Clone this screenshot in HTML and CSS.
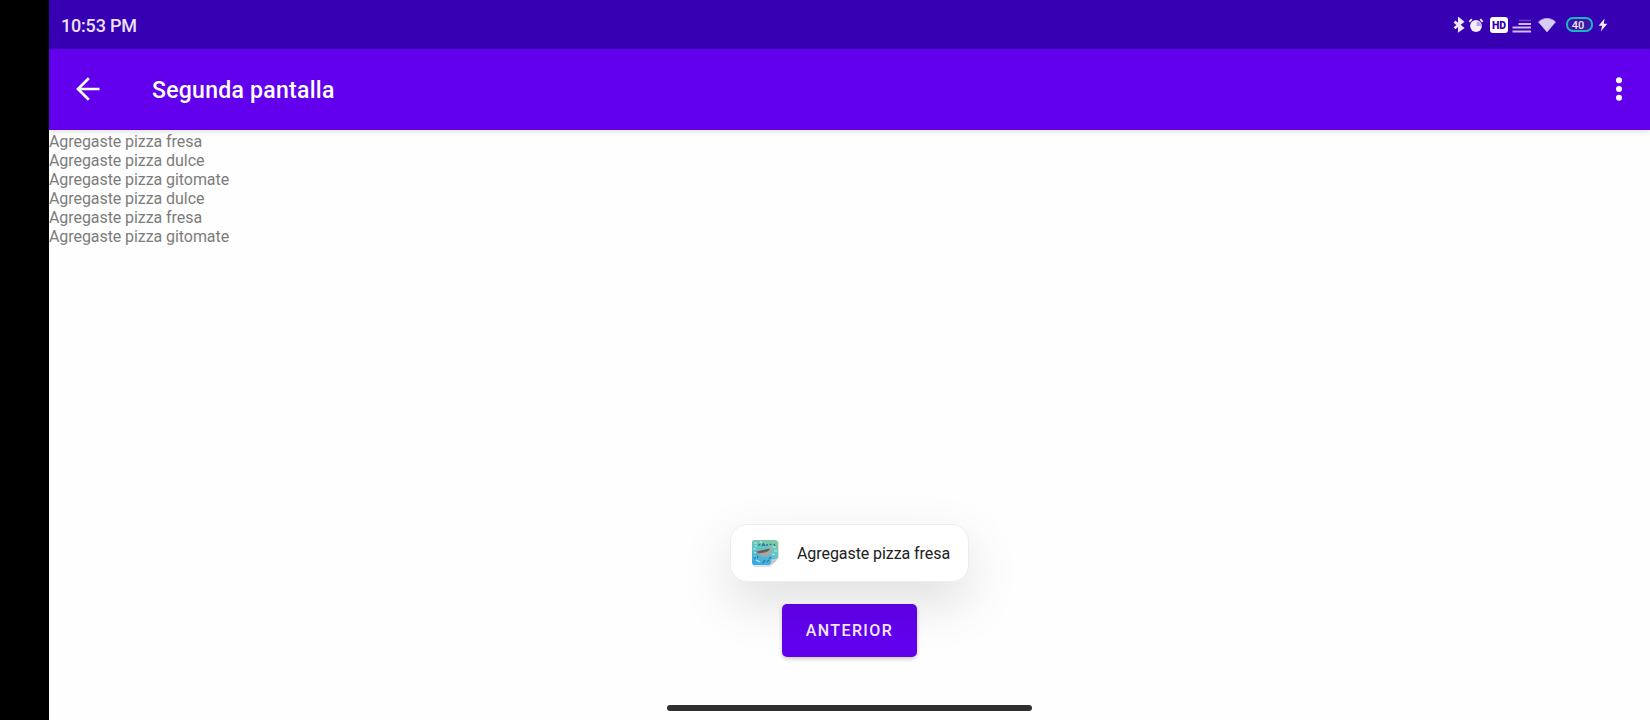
FILE: index.html
```html
<!DOCTYPE html>
<html lang="es">
<head>
<meta charset="utf-8">
<title>Segunda pantalla</title>
<link rel="stylesheet" href="styles.css">
</head>
<body>
<div class="screen">
  <header class="status">
    <span class="clock">10:53 PM</span>
    <div class="status-icons">
      <svg class="bt" width="12" height="16" viewBox="0 0 12 16"><path d="M1.500 4.600 9.400 11 6.300 13.200V2.300L9.400 4.800 1.500 11.200" fill="none" stroke="#efe8fa" stroke-width="2.700"/></svg>
      <svg class="alarm" width="16" height="16" viewBox="0 0 16 16"><circle cx="8" cy="9" r="5.900" fill="#f3edfc"/><path d="M8.600 4.600v4.400h4.600A4.500 4.500 0 0 0 8.600 4.600Z" fill="#b9a2e4"/><path d="M1.300 4.800 3.800 2.200M14.700 4.800 12.200 2.200" stroke="#efe8fa" stroke-width="1.900" fill="none"/></svg>
      <span class="hd">HD</span>
      <svg class="signal" width="20" height="16" viewBox="0 0 20 16"><path d="M7 3.500h12" stroke="#6a42c6" stroke-width="1.500"/><path d="M6.500 7h12.500M.5 10.500h18.500M.5 14.500h18.500" stroke="#cdbcef" stroke-width="1.900"/></svg>
      <svg class="wifi" width="18" height="16" viewBox="0 0 18 16"><path d="M.5 5C5 .2 13 .2 17.500 5L9 15Z" fill="#d9ccf3" stroke="#d9ccf3" stroke-width=".6" stroke-linejoin="round"/></svg>
      <span class="battery">40</span>
      <svg class="bolt" width="10" height="14" viewBox="0 0 10 14"><path d="M6.600.5.6 7.700H4.200L2.700 13.500 9.400 5.800H5.700Z" fill="#f3edfc"/></svg>
    </div>
  </header>
  <div class="toolbar">
    <svg class="back" width="24" height="26" viewBox="0 0 24 26"><path d="M23.500 12H2M12.800 1.200 2 12l10.800 10.800" fill="none" stroke="#fff" stroke-width="2.700"/></svg>
    <h1 class="title">Segunda pantalla</h1>
    <svg class="more" width="6" height="26" viewBox="0 0 6 26"><g fill="#fff"><circle cx="3" cy="3.300" r="3"/><circle cx="3" cy="12" r="3"/><circle cx="3" cy="20.700" r="3"/></g></svg>
  </div>
  <main class="content">
    <ul class="list">
      <li>Agregaste pizza fresa</li>
      <li>Agregaste pizza dulce</li>
      <li>Agregaste pizza gitomate</li>
      <li>Agregaste pizza dulce</li>
      <li>Agregaste pizza fresa</li>
      <li>Agregaste pizza gitomate</li>
    </ul>
    <button class="prev">ANTERIOR</button>
    <div class="home-bar"></div>
  </main>
  <div class="toast">
    <svg class="app-icon" width="29" height="29" viewBox="0 0 29 29">
      <defs>
        <linearGradient id="sky" x1=".7" y1="0" x2=".3" y2="1"><stop offset="0" stop-color="#82c9a0"/><stop offset=".45" stop-color="#63c3c8"/><stop offset="1" stop-color="#38a9e2"/></linearGradient>
        <linearGradient id="fold" x1="0" y1="0" x2="1" y2="1"><stop offset="0" stop-color="#f4f8f8"/><stop offset=".5" stop-color="#c3cccc"/><stop offset="1" stop-color="#8c9698"/></linearGradient>
      </defs>
      <path d="M4 2H26Q28 2 28 4V19L19 28H4Q2 28 2 26V4Z" fill="#000" opacity=".12"/>
      <path d="M3 1H24Q27 1 27 4V18.500L18.500 26H3Q1 26 1 24V3Q1 1 3 1Z" fill="url(#sky)"/>
      <path d="M3 4h3M4 7h2M2 10h3M22 8h3M23 12h3M9 2.500l2 1M21 15l3 1M3 17l3 1M5 21l4 2M3 13l2 1" stroke="#b9ebe0" stroke-width="1.200"/>
      <path d="M7.500 6.500l1.500-1.500M11 7l1.500-2 1.500 2M16 5v2M18.500 5.500h2M23 5l1 2" stroke="#31759c" stroke-width="1.500" fill="none"/>
      <path d="M5 12Q13 11.500 21 8.500 21 16 14 17.500 8 17 5 12Z" fill="#a3aaa6"/>
      <path d="M5 12.500Q12 11.500 19 9.500L17 12.500Q12 14.500 7 14.500Z" fill="#a45a58"/>
      <path d="M8 13 18 10.500" stroke="#3c6665" stroke-width="1.400"/>
      <path d="M3 19l2-1M6 17l1 2M12 24l2-3M16 23l2-2M20 18l-2 2" stroke="#2878bb" stroke-width="1.400" fill="none"/>
      <path d="M17.500 26.500Q21 24 20.500 20.500 24 21 27 18.500 25 24 17.500 26.500Z" fill="url(#fold)"/>
    </svg>
    <span class="toast-text">Agregaste pizza fresa</span>
  </div>
</div>
</body>
</html>
```
FILE: styles.css
```css
* { box-sizing: border-box; }
body { margin: 0; background: #000; font-family: Roboto, "Noto Sans", sans-serif; }
.screen { position: relative; display: flex; flex-direction: column; width: 1601px; height: 720px; margin-left: 49px; background: #fefefe; overflow: hidden; }
.status { display: flex; align-items: center; justify-content: space-between; height: 49px; padding: 0 42px 0 12px; background: #3700b3; color: #ebe2f9; }
.clock { font-size: 18px; font-weight: 500; line-height: 22px; padding-top: 3px; letter-spacing: -.2px; }
.status-icons { display: flex; align-items: center; }
.alarm { margin-left: 3px; }
.hd { width: 18px; height: 16px; margin-left: 6px; border-radius: 3px; background: #fff; color: #3700b3; font-size: 10.5px; font-weight: 900; line-height: 17px; text-align: center; }
.signal { margin-left: 4px; }
.wifi { margin-left: 6px; }
.battery { width: 27px; height: 15px; margin-left: 10px; padding-right: 3px; border: 2px solid #1cb7bd; border-radius: 7px; background: #3b16a6; color: #efe8fa; font-size: 11px; font-weight: 500; line-height: 13px; text-align: center; }
.bolt { margin-left: 5px; }
.toolbar { position: relative; z-index: 1; display: flex; align-items: center; height: 81px; padding: 0 28px 0 27px; background: #6200ee; box-shadow: 0 1px 6px rgba(0, 0, 0, .14); }
.title { flex: 1; margin: 0 0 0 52px; color: #fff; font-size: 23px; font-weight: 500; line-height: 28px; padding-top: 3px; letter-spacing: .27px; }
.content { display: flex; flex: 1; flex-direction: column; align-items: center; }
.list { align-self: stretch; margin: 0; padding: 2px 0 0; list-style: none; color: #7c7c7c; font-size: 16px; line-height: 19px; letter-spacing: -.07px; }
.prev { width: 135px; height: 53px; margin-top: auto; padding: 0; border: 0; border-radius: 5px; background: #6200ee; color: #f4ebff; font: 500 16px/53px Roboto, "Noto Sans", sans-serif; letter-spacing: 1.4px; box-shadow: 0 2px 4px rgba(0, 0, 0, .2); }
.home-bar { width: 365px; height: 6px; margin: 48px 0 9px; border-radius: 3px; background: #303030; }
.toast { position: absolute; z-index: 2; top: 524px; left: 681px; display: flex; align-items: center; width: 239px; height: 58px; padding-left: 20px; border: 1px solid #ededed; border-radius: 17px; background: #fff; box-shadow: 0 20px 52px rgba(0, 0, 0, .13); }
.toast-text { margin-left: 17px; color: #202020; font-size: 16px; line-height: 20px; padding-top: 2px; letter-spacing: -.07px; }
```
